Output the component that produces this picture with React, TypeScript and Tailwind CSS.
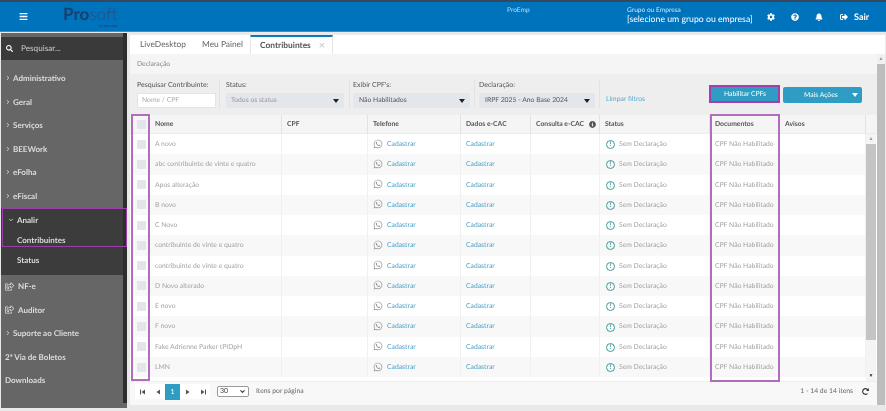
import React from "react";
import { ChevronRight, ChevronDown } from "lucide-react";
import { FaWhatsapp, FaBars, FaSearch, FaCog, FaQuestionCircle, FaBell, FaSignOutAlt, FaRegShareSquare, FaInfoCircle, FaRedoAlt } from "react-icons/fa";

const names = ["A novo","abc contribuinte de vinte e quatro","Apos alteração","B novo","C Novo","contribuinte de vinte e quatro","contribuinte de vinte e quatro","D Novo alterado","E novo","F novo","Fake Adrienne Parker tPIDpH","LMN"];

function Caret() {
  return <span className="w-0 h-0 border-l-[3.5px] border-r-[3.5px] border-t-[4px] border-l-transparent border-r-transparent border-t-[#222] shrink-0" />;
}

function NavItem({ label, icon }: { label: string; icon?: "chev" | "ext" | "none" }) {
  return (
    <div className="h-[23.5px] flex items-center pl-[4px] text-[8px] font-bold text-[#dcdcdc] whitespace-nowrap">
      {icon === "chev" && <ChevronRight size={6} strokeWidth={3.5} className="mr-[2px] shrink-0" />}
      {icon === "ext" && <FaRegShareSquare size={9} className="mr-[4px] shrink-0" />}
      {label}
    </div>
  );
}

function Filter({ label, value, w, pl, sw, tp, dark }: { label: string; value: string; w: string; pl: string; sw: string; tp: string; dark?: boolean }) {
  return (
    <div className={`${w} ${pl} flex flex-col border-r border-[#e2e2e2] h-[28px] shrink-0`}>
      <div className="text-[7px] leading-[10px] text-[#555] mb-[3px] whitespace-nowrap">{label}</div>
      <div className={`${sw} ${tp} h-[15px] bg-[#e3e7ec] rounded-[2px] flex items-center justify-between pr-[5px]`}>
        <span className={`text-[6.8px] whitespace-nowrap ${dark ? "text-[#555]" : "text-[#999]"}`}>{value}</span>
        <Caret />
      </div>
    </div>
  );
}

const cols = "grid grid-cols-[18px_132px_86px_93px_70px_69px_110px_70px_86px]";

function Head({ children, cls = "" }: { children?: React.ReactNode; cls?: string }) {
  return <div className={`border-r border-[#e2e2e2] flex items-center pl-[5px] text-[6.8px] font-bold text-[#555] whitespace-nowrap ${cls}`}>{children}</div>;
}

function Row({ name, odd }: { name: string; odd: boolean }) {
  const cell = "flex items-center border-r border-[#f0f0f0] pl-[5px] text-[6.8px] text-[#a3a3a3] whitespace-nowrap";
  return (
    <div className={`${cols} h-[20.27px] ${odd ? "bg-[#f8f8f8]" : "bg-white"}`}>
      <div className="flex items-center justify-center"><span className="w-[9px] h-[9px] rounded-[1px] bg-[#e2e6ea]" /></div>
      <div className={cell}>{name}</div>
      <div className={cell} />
      <div className={cell}>
        <FaWhatsapp size={10} className="text-[#999] mr-[4px] -mt-[1px] shrink-0" />
        <span className="text-[#4ba3c7]">Cadastrar</span>
      </div>
      <div className={cell}><span className="text-[#4ba3c7]">Cadastrar</span></div>
      <div className={cell} />
      <div className={`${cell} pl-[6px]`}>
        <span className="w-[9px] h-[9px] mt-[1px] rounded-full border border-[#3c9a96] text-[#3c9a96] text-[6.5px] font-bold flex items-center justify-center mr-[4px] leading-[7px] shrink-0">!</span>
        Sem Declaração
      </div>
      <div className={cell}>CPF Não Habilitado</div>
      <div className={cell} />
    </div>
  );
}

function PageBtn({ children, active }: { children: React.ReactNode; active?: boolean }) {
  return (
    <div className={`w-[15px] flex items-center justify-center text-[7px] ${active ? "bg-[#2f9cc3] text-white h-[16px]" : "bg-white text-[#555] h-[15px]"}`}>
      {children}
    </div>
  );
}

function Tri({ dir, bar }: { dir: "l" | "r"; bar?: boolean }) {
  return (
    <svg width="6" height="6" viewBox="0 0 6 6" fill="#555">
      {dir === "l" ? <polygon points="5,0.5 5,5.5 1.5,3" /> : <polygon points="1,0.5 1,5.5 4.5,3" />}
      {bar && (dir === "l" ? <rect x="0" y="0.5" width="1" height="5" /> : <rect x="5" y="0.5" width="1" height="5" />)}
    </svg>
  );
}

export default function App() {
  return (
    <div className="relative w-[886px] h-[411px] overflow-hidden bg-[#e9e9e9] flex flex-col blur-[0.35px] [text-rendering:geometricPrecision]" style={{ fontFamily: 'Lato, "Open Sans", sans-serif' }}>
      <header className="h-[32px] shrink-0 bg-[#0073bd] border-t-[2px] border-[#34495e] border-b border-b-[#3a8fd0] flex items-center text-white">
        <FaBars size={9} className="ml-[19px] shrink-0" />
        <div className="ml-[35px] relative -mt-[5px] h-[14px] w-[55px] shrink-0">
          <div className="text-[17px] leading-[14px] whitespace-nowrap">
            <span className="font-bold text-[#17406e]">Pro</span>
            <span className="font-normal text-[#1f5a94]">soft</span>
          </div>
          <div className="absolute right-0 top-[17px] text-[3.5px] leading-[4px] text-[#17406e] whitespace-nowrap">by attendata</div>
        </div>
        <div className="ml-[389px] w-[24px] text-[6.6px] leading-[8px] text-[#b8dcf3] self-start mt-[4px] whitespace-nowrap shrink-0">ProEmp</div>
        <div className="ml-[96px] self-start mt-[4px] w-[126px] shrink-0 whitespace-nowrap">
          <div className="text-[6.6px] leading-[8px] text-[#cbe5f6]">Grupo ou Empresa</div>
          <div className="text-[8.7px] leading-[10px]">[selecione um grupo ou empresa]</div>
        </div>
        <FaCog size={8} className="ml-[14px] shrink-0" />
        <FaQuestionCircle size={8} className="ml-[16px] shrink-0" />
        <FaBell size={8} className="ml-[16px] shrink-0" />
        <FaSignOutAlt size={8} className="ml-[17px] shrink-0" />
        <span className="ml-[6px] text-[9px] font-bold whitespace-nowrap">Sair</span>
      </header>

      <div className="flex flex-1 min-h-0">
        <div className="ml-[1px] mt-[1px] w-[126px] h-[375px] shrink-0 bg-[#666] flex">
          <aside className="w-[122px] shrink-0 flex flex-col pt-[4px]">
            <div className="h-[23px] bg-[#3a3a3a] flex items-center pl-[5px] text-[8.2px] text-[#ccc] shrink-0">
              <FaSearch size={7} className="text-white mr-[8px]" />Pesquisar...
            </div>
            <div className="h-[6.5px] shrink-0" />
            <NavItem label="Administrativo" icon="chev" />
            <NavItem label="Geral" icon="chev" />
            <NavItem label="Serviços" icon="chev" />
            <NavItem label="BEEWork" icon="chev" />
            <NavItem label="eFolha" icon="chev" />
            <NavItem label="eFiscal" icon="chev" />
            <div className="bg-[#3c3c3c] h-[67px] pt-[2px] text-[#dcdcdc] text-[8px] font-bold shrink-0 -mr-[1px]">
              <div className="h-[20px] flex items-center pl-[7px]">
                <ChevronDown size={6} strokeWidth={3.5} className="mr-[3px]" />Analir
              </div>
              <div className="h-[20px] flex items-center pl-[16px]">Contribuintes</div>
              <div className="h-[20px] flex items-center pl-[16px]">Status</div>
            </div>
            <NavItem label="NF-e" icon="ext" />
            <NavItem label="Auditor" icon="ext" />
            <NavItem label="Suporte ao Cliente" icon="chev" />
            <NavItem label="2ª Via de Boletos" icon="none" />
            <NavItem label="Downloads" icon="none" />
          </aside>
          <div className="w-[4px] h-[370px] bg-[#2e2e2e] shrink-0" />
        </div>
        <div className="w-[3px] shrink-0" />

        <main className="w-[755px] shrink-0 h-[370px] bg-white flex flex-col mt-[3px]">
          <div className="h-[19px] flex items-stretch text-[8.4px] text-[#666] shrink-0 pl-[1px] whitespace-nowrap">
            <div className="w-[60px] pl-[9px] flex items-center">LiveDesktop</div>
            <div className="w-[59px] pl-[11px] flex items-center">Meu Painel</div>
            <div className="w-[83px] pl-[9px] flex items-center gap-[8px] font-bold text-[#555] border-t-2 border-[#0a78bf] border-x border-x-[#e5e5e5]">
              Contribuintes <span className="text-[#c4c4c4] font-normal text-[11px] leading-none">×</span>
            </div>
          </div>

          <div className="flex flex-1 min-h-0">
            <div className="w-[747px] flex flex-col shrink-0">
              <div className="h-[20px] bg-[#f5f5f5] flex items-center pl-[7px] text-[6.8px] text-[#888] shrink-0">Declaração</div>
              <div className="h-[41px] bg-[#eeeeee] flex items-start pt-[6px] shrink-0">
                <div className="w-[90px] pl-[7px] flex flex-col h-[28px] border-r border-[#e2e2e2] shrink-0">
                  <div className="text-[7px] leading-[10px] text-[#555] mb-[3px] whitespace-nowrap">Pesquisar Contribuinte:</div>
                  <div className="w-[79px] h-[15px] bg-white border border-[#e4e4e4] flex items-center pl-[4px] text-[6.8px] text-[#aaa]">Nome / CPF</div>
                </div>
                <Filter label="Status:" value="Todos os status" w="w-[130px]" pl="pl-[6px]" sw="w-[118px]" tp="pl-[5px]" />
                <Filter label="Exibir CPF's:" value="Não Habilitados" w="w-[125px]" pl="pl-[3px]" sw="w-[117px]" tp="pl-[6px]" dark />
                <Filter label="Declaração:" value="IRPF 2025 - Ano Base 2024" w="w-[125px]" pl="pl-[4px]" sw="w-[116px]" tp="pl-[6px]" dark />
                <div className="text-[#5aa9cc] text-[6.8px] leading-[10px] pl-[6px] pt-[14px] w-[110px] shrink-0 whitespace-nowrap">Limpar filtros</div>
                <div className="w-[70px] h-[17px] mt-[6px] bg-[#2f9cc3] rounded-[1px] text-white text-[6.8px] flex items-center justify-center shrink-0">Habilitar CPFs</div>
                <div className="ml-[3px] w-[79px] h-[16px] mt-[7px] bg-[#2f9cc3] rounded-[2px] text-white text-[6.8px] flex items-center justify-between pl-[21px] pr-[4px] shrink-0">
                  Mais Ações
                  <span className="w-0 h-0 border-l-[3.5px] border-r-[3.5px] border-t-[4px] border-l-transparent border-r-transparent border-t-white" />
                </div>
              </div>

              <div className="flex h-[19px] bg-[#f5f5f5] border-b border-[#ececec] shrink-0 pl-[2px]">
                <div className={cols}>
                  <div className="flex items-center justify-center"><span className="w-[9px] h-[9px] rounded-[1px] bg-[#e2e6ea]" /></div>
                  <Head>Nome</Head>
                  <Head>CPF</Head>
                  <Head>Telefone</Head>
                  <Head>Dados e-CAC</Head>
                  <Head cls="gap-[5px]">Consulta e-CAC <FaInfoCircle size={7} className="shrink-0" /></Head>
                  <Head>Status</Head>
                  <Head>Documentos</Head>
                  <Head>Avisos</Head>
                </div>
              </div>
              <div className="h-[247px] flex pl-[2px] overflow-hidden shrink-0 bg-white">
                <div className="w-[734px] shrink-0">
                  {names.map((n, i) => <Row key={i} name={n} odd={i % 2 === 1} />)}
                </div>
                <div className="w-[10px] bg-[#f4f4f4] flex flex-col items-center shrink-0 relative">
                  <span className="text-[5px] leading-[10px] text-[#999] h-[10px]">▲</span>
                  <div className="w-full h-[196px] bg-[#c4c4c4]" />
                  <span className="text-[5px] leading-[10px] text-[#333] mt-auto">▼</span>
                </div>
              </div>
              <div className="h-[24px] bg-[#f8f8f8] flex items-start pt-[2px] pl-[5px] pr-[5px] shrink-0 border-t border-[#eee]">
                <PageBtn><Tri dir="l" bar /></PageBtn>
                <PageBtn><Tri dir="l" /></PageBtn>
                <PageBtn active>1</PageBtn>
                <PageBtn><Tri dir="r" /></PageBtn>
                <PageBtn><Tri dir="r" bar /></PageBtn>
                <div className="ml-[7px] mt-[2px] w-[32px] h-[11px] border border-[#999] rounded-[2px] bg-white flex items-center justify-between px-[2px] text-[7px] text-[#444]">30 <ChevronDown size={7} strokeWidth={4} /></div>
                <span className="ml-[7px] text-[6.8px] leading-[15px] text-[#666] whitespace-nowrap">Itens por página</span>
                <span className="ml-auto text-[6.8px] leading-[15px] text-[#666] whitespace-nowrap">1 - 14 de 14 itens</span>
                <FaRedoAlt size={7} className="ml-[9px] mr-[3px] mt-[4px] text-[#333]" />
              </div>
            </div>
            <div className="w-[8px] bg-[#f1f1f1] shrink-0 flex flex-col">
              <div className="h-[10px] text-[5px] leading-[10px] text-center text-[#999]">▲</div>
              <div className="flex-1 bg-[#bdbdbd]" />
            </div>
          </div>
        </main>
      </div>

      {/* destaque roxo */}
      <div className="absolute left-[2px] top-[208px] w-[125px] h-[39px] border-[1.5px] border-[#9a3fa8]" />
      <div className="absolute left-[131px] top-[114px] w-[19px] h-[267px] border-2 border-[#b06cbd]" />
      <div className="absolute left-[709px] top-[85px] w-[71px] h-[18px] border-2 border-[#a23fab]" />
      <div className="absolute left-[710px] top-[114px] w-[70px] h-[268px] border-2 border-[#b06cbd]" />
    </div>
  );
}
